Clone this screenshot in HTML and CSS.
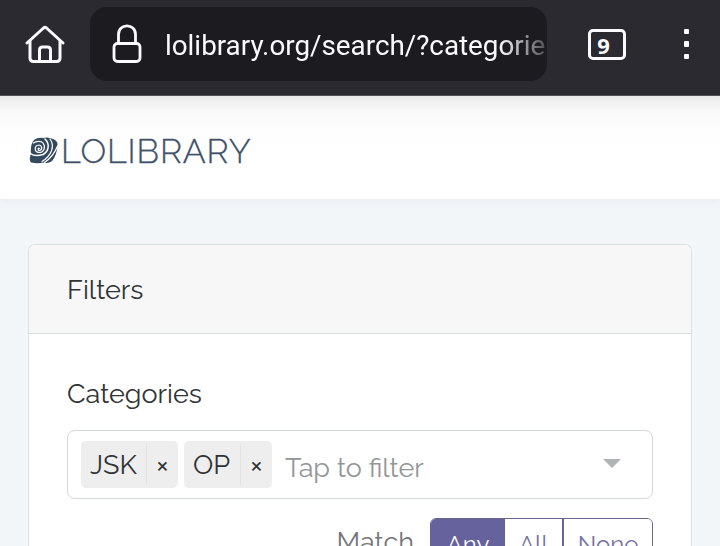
FILE: index.html
```
<!DOCTYPE html>
<html lang="en">
<head>
    <meta charset="UTF-8">
    <meta name="viewport" content="width=device-width, initial-scale=1.0">
    <title>Lolibrary</title>
    <link rel="stylesheet" href="styles.css">
</head>
<body>
    <div class="browser-bar">
        <svg class="home" width="42" height="40" viewBox="0 0 42 40" fill="none" stroke="#fbfbfe" stroke-width="3" stroke-linecap="round" stroke-linejoin="round">
            <path d="M3 19 L19.500 4 Q21 2.800 22.500 4 L39 19"/>
            <path d="M6 17 V34 Q6 37.500 9.500 37.500 H32.500 Q36 37.500 36 34 V17"/>
            <path d="M15.500 37 V26 Q15.500 23 18.500 23 H23.500 Q26.500 23 26.500 26 V37"/>
        </svg>
        <div class="address">
            <svg class="lock" width="30" height="40" viewBox="0 0 30 40" fill="none" stroke="#fbfbfe" stroke-width="2.800">
                <rect x="2" y="19.500" width="26" height="18" rx="3.500"/>
                <path d="M6.500 19.500 V10.500 C6.500 -1 23.500 -1 23.500 10.500 V19.500"/>
            </svg>
            <span class="url">lolibrary.org/search/?categorie</span>
        </div>
        <div class="tabs">9</div>
        <div class="menu"><i></i><i></i><i></i></div>
    </div>

    <header class="site-header">
        <svg class="rose" width="29" height="27" viewBox="0 0 29 27">
            <path fill="#34495e" d="M5 3 Q9 0 14 1 Q19 -0.500 24 2 Q29 4 28.500 8 Q28 18 23 24 Q19 27 15 25.500 Q9 27 2 25.500 Q-0.500 22 2 17 Q1 8 5 3 Z"/>
            <g fill="none" stroke="#fff" stroke-linecap="round">
                <path stroke-width="1.200" d="M10.500 11.500 C8.500 10 8.500 14 11 13.500 C14 12 12.500 8 10 8 C5 8.500 5 15 10 15.500 C15 15.500 17 10 14 6 C12 3.500 7 4 4.500 6"/>
                <path stroke-width="1.500" d="M16 2 C21 7 20 14 14 17.500 C9 19 4 18.500 1.500 16.500"/>
                <path stroke-width="1.200" d="M21 2 C26 9 23 18 13 24.500"/>
                <path stroke-width="1.300" d="M28.500 9 C26 16 22 21 15.500 25.500"/>
            </g>
        </svg>
        <span class="brand">LOLIBRARY</span>
    </header>

    <main class="page">
        <div class="card">
            <div class="card-header">Filters</div>
            <div class="card-body">
                <label class="label">Categories</label>
                <div class="select">
                    <span class="tag"><span class="tag-name">JSK</span><span class="tag-remove">×</span></span>
                    <span class="tag tag-op"><span class="tag-name">OP</span><span class="tag-remove">×</span></span>
                    <span class="placeholder">Tap to filter</span>
                    <span class="caret"></span>
                </div>
                <div class="match">
                    <span class="match-label">Match</span>
                    <div class="btn-group">
                        <button class="btn active">Any</button>
                        <button class="btn btn-all">All</button>
                        <button class="btn btn-none">None</button>
                    </div>
                </div>
            </div>
        </div>
    </main>
</body>
</html>
```
FILE: styles.css
```
* {
    box-sizing: border-box;
}
body {
    margin: 0;
    height: 546px;
    overflow: hidden;
    background: #f2f6f9;
    color: #303336;
    font-family: 'Raleway', 'Lato', sans-serif;
    font-size: 27px;
}
svg {
    display: block;
    flex: none;
}

/* Browser toolbar */
.browser-bar {
    display: flex;
    align-items: center;
    height: 96px;
    padding: 0 0 7px 24px;
    background: #2b2a31;
    border-bottom: 1px solid #55545a;
}
.address {
    display: flex;
    align-items: center;
    width: 457px;
    height: 74px;
    margin-left: 24px;
    padding-left: 22px;
    border-radius: 17px;
    background: #1c1b20;
}
.url {
    width: 381px;
    margin-left: 23px;
    padding-top: 2px;
    color: #fbfbfe;
    font-family: 'Roboto', sans-serif;
    font-size: 27.8px;
    white-space: nowrap;
    -webkit-mask-image: linear-gradient(to right, #000 335px, transparent 395px);
    mask-image: linear-gradient(to right, #000 335px, transparent 395px);
}
.tabs {
    width: 38px;
    height: 31px;
    margin-left: 41px;
    padding-right: 7px;
    border: 3px solid #fbfbfe;
    border-radius: 5px;
    color: #fbfbfe;
    font: bold 22px/27px 'Noto Sans', sans-serif;
    text-align: center;
}
.menu {
    display: flex;
    flex-direction: column;
    gap: 7px;
    margin-left: 58px;
}
.menu i {
    width: 5px;
    height: 5.5px;
    border-radius: 1px;
    background: #fbfbfe;
}

/* Site header */
.site-header {
    display: flex;
    align-items: center;
    height: 103px;
    padding: 6px 0 0 29px;
    background: linear-gradient(#e9e9e9, #f8f8f8 14px, #fefefe 34px, #fff);
    box-shadow: 0 2px 5px rgba(50, 60, 100, .05);
}
.brand {
    margin-left: 3px;
    color: #40516a;
    font-size: 34px;
    font-weight: 300;
    letter-spacing: .9px;
    line-height: 40px;
    -webkit-text-stroke: .3px #40516a;
}

/* Filters */
.page {
    padding: 45px 28px 0;
}
.card {
    height: 302px;
    border: 1px solid #dce1e4;
    border-bottom: 0;
    border-radius: 7px 7px 0 0;
    background: #fff;
    overflow: hidden;
}
.card-header {
    height: 89px;
    padding-left: 38px;
    border-bottom: 1px solid #dce1e4;
    background: #f7f7f7;
    line-height: 89px;
}
.card-body {
    padding: 40px 38px 0;
}
.label {
    display: block;
    height: 56px;
    line-height: 40px;
}
.select {
    display: flex;
    align-items: center;
    height: 69px;
    padding: 0 31px 0 13px;
    border: 1px solid #d3d8da;
    border-radius: 8px;
}
.tag {
    display: flex;
    align-items: center;
    width: 97px;
    height: 47px;
    margin-right: 6px;
    border-radius: 5px;
    background: #eee;
}
.tag-op {
    width: 88px;
}
.tag-name {
    flex: 1;
    padding-left: 9px;
}
.tag-remove {
    width: 32px;
    height: 41px;
    border-left: 1px solid #e2e4e4;
    font-size: 28px;
    line-height: 41px;
    text-align: center;
}
.placeholder {
    margin: 5px 0 0 7px;
    color: #929696;
}
.caret {
    margin: 0 0 3px auto;
    border: 9px solid transparent;
    border-top-color: #b0b4b4;
    border-bottom: 0;
}
.match {
    display: flex;
    justify-content: flex-end;
    margin-top: 19px;
}
.match-label {
    margin-right: 16px;
    color: #73777a;
    line-height: 48px;
}
.btn-group {
    display: flex;
    height: 54px;
    border: 1px solid #67658b;
    border-radius: 6px;
    overflow: hidden;
}
.btn {
    width: 74px;
    padding: 0;
    border: 0;
    background: #fff;
    color: #7570a3;
    font: 24px/50px 'Raleway', 'Lato', sans-serif;
}
.btn.active {
    background: #66629d;
    color: #fff;
}
.btn-all {
    width: 57px;
}
.btn-none {
    width: 90px;
    border-left: 2px solid #66629d;
}
```
